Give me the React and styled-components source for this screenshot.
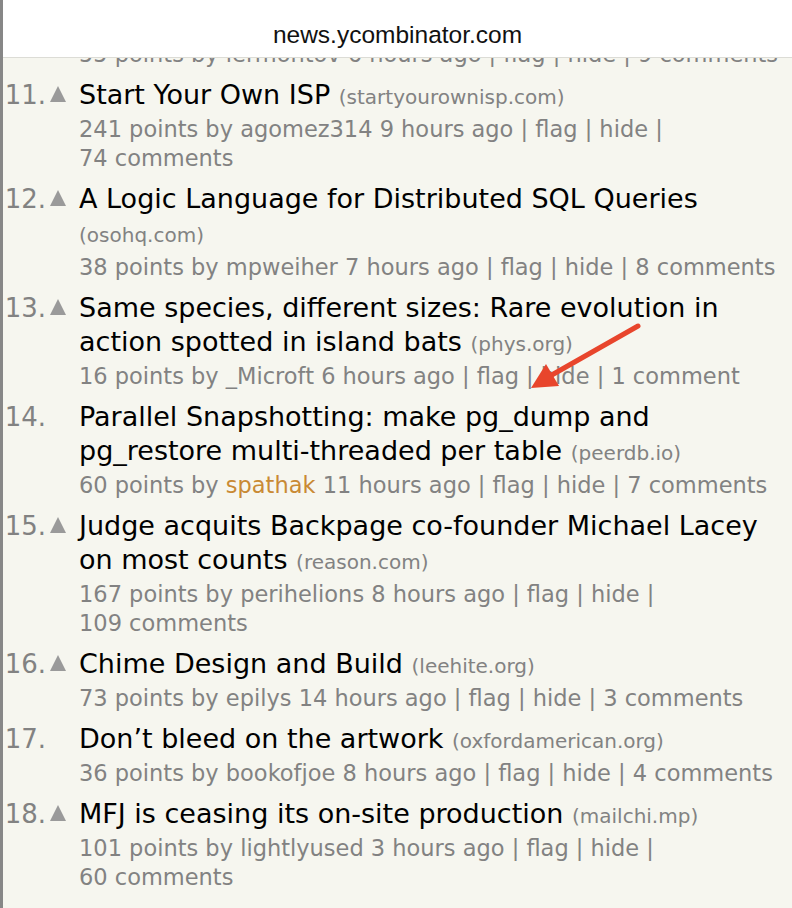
import React from 'react';
import styled, { createGlobalStyle } from 'styled-components';

const GlobalStyle = createGlobalStyle`
  html, body {
    margin: 0;
    padding: 0;
    background: #f6f6ef;
  }
  * {
    box-sizing: border-box;
  }
`;

// comment links keep their count and word together, as on HN (&nbsp;)
const stories = [
  { rank: 11, vote: true, title: 'Start Your Own ISP', site: 'startyourownisp.com', points: 241, user: 'agomez314', age: '9 hours ago', comments: '74\u00a0comments' },
  { rank: 12, vote: true, title: 'A Logic Language for Distributed SQL Queries', site: 'osohq.com', points: 38, user: 'mpweiher', age: '7 hours ago', comments: '8\u00a0comments' },
  { rank: 13, vote: true, title: 'Same species, different sizes: Rare evolution in action spotted in island bats', site: 'phys.org', points: 16, user: '_Microft', age: '6 hours ago', comments: '1\u00a0comment' },
  { rank: 14, vote: false, title: 'Parallel Snapshotting: make pg_dump and pg_restore multi-threaded per table', site: 'peerdb.io', points: 60, user: 'spathak', newUser: true, age: '11 hours ago', comments: '7\u00a0comments' },
  { rank: 15, vote: true, title: 'Judge acquits Backpage co-founder Michael Lacey on most counts', site: 'reason.com', points: 167, user: 'perihelions', age: '8 hours ago', comments: '109\u00a0comments' },
  { rank: 16, vote: true, title: 'Chime Design and Build', site: 'leehite.org', points: 73, user: 'epilys', age: '14 hours ago', comments: '3\u00a0comments' },
  { rank: 17, vote: false, title: 'Don\u2019t bleed on the artwork', site: 'oxfordamerican.org', points: 36, user: 'bookofjoe', age: '8 hours ago', comments: '4\u00a0comments' },
  { rank: 18, vote: true, title: 'MFJ is ceasing its on-site production', site: 'mailchi.mp', points: 101, user: 'lightlyused', age: '3 hours ago', comments: '60\u00a0comments' },
];

export default function App() {
  return (
    <Page>
      <GlobalStyle />
      <AddressBar>news.ycombinator.com</AddressBar>
      <List>
        <CutLine>55 points by lermontov 6 hours ago | flag | hide | 9 comments</CutLine>
        {stories.map((s) => (
          <Story key={s.rank}>
            <Rank>{s.rank}.</Rank>
            <VoteCell>{s.vote && <VoteArrow />}</VoteCell>
            <Body>
              <Title>
                {s.title} <Site>({s.site})</Site>
              </Title>
              <Subtext>
                {s.points} points by <User $new={s.newUser}>{s.user}</User> {s.age} | flag | hide | {s.comments}
              </Subtext>
            </Body>
          </Story>
        ))}
      </List>
      <Annotation viewBox="0 0 792 908" width="792" height="908">
        <line x1="638" y1="326" x2="550" y2="376" stroke="#e8452c" strokeWidth="5" strokeLinecap="round" />
        <polygon points="531,388 546,364 559,386" fill="#e8452c" />
      </Annotation>
    </Page>
  );
}

const Page = styled.div`
  position: relative;
  height: 908px;
  overflow: hidden;
  background: #f6f6ef;
  border-left: 3px solid #878787;
  font-family: "DejaVu Sans", Verdana, sans-serif;
`;

const AddressBar = styled.header`
  height: 58px;
  padding-top: 12px;
  display: flex;
  align-items: center;
  justify-content: center;
  background: #fff;
  border-bottom: 1px solid #dcdcd6;
  font-family: "Liberation Sans", Arial, sans-serif;
  font-size: 24.5px;
  color: #111;
  position: relative;
  z-index: 1;
`;

const List = styled.main`
  display: flex;
  flex-direction: column;
  gap: 9px;
`;

const CutLine = styled.div`
  margin-top: -18px;
  padding-left: 76px;
  font-size: 22.5px;
  line-height: 29px;
  color: #828282;
  white-space: nowrap;
`;

const Story = styled.div`
  display: grid;
  grid-template-columns: 43px 33px 1fr;
  align-items: start;
`;

const Rank = styled.span`
  text-align: right;
  font-size: 26px;
  line-height: 34px;
  color: #828282;
`;

const VoteCell = styled.span`
  height: 34px;
  display: flex;
  align-items: center;
  padding-left: 4px;
`;

const VoteArrow = styled.span`
  width: 0;
  height: 0;
  border-left: 8.5px solid transparent;
  border-right: 8.5px solid transparent;
  border-bottom: 16px solid #9a9a9a;
  margin-top: -3px;
`;

const Body = styled.div`
  display: flex;
  flex-direction: column;
  gap: 3px;
  padding-right: 2px;
`;

const Title = styled.div`
  font-size: 27px;
  line-height: 34px;
  color: #000;
`;

const Site = styled.span`
  font-size: 20px;
  line-height: 1;
  color: #828282;
`;

const Subtext = styled.div`
  font-size: 22.5px;
  line-height: 29px;
  color: #828282;
`;

const User = styled.span`
  color: ${(p) => (p.$new ? '#c98a34' : 'inherit')};
`;

const Annotation = styled.svg`
  position: absolute;
  top: 0;
  left: -3px;
  pointer-events: none;
`;
